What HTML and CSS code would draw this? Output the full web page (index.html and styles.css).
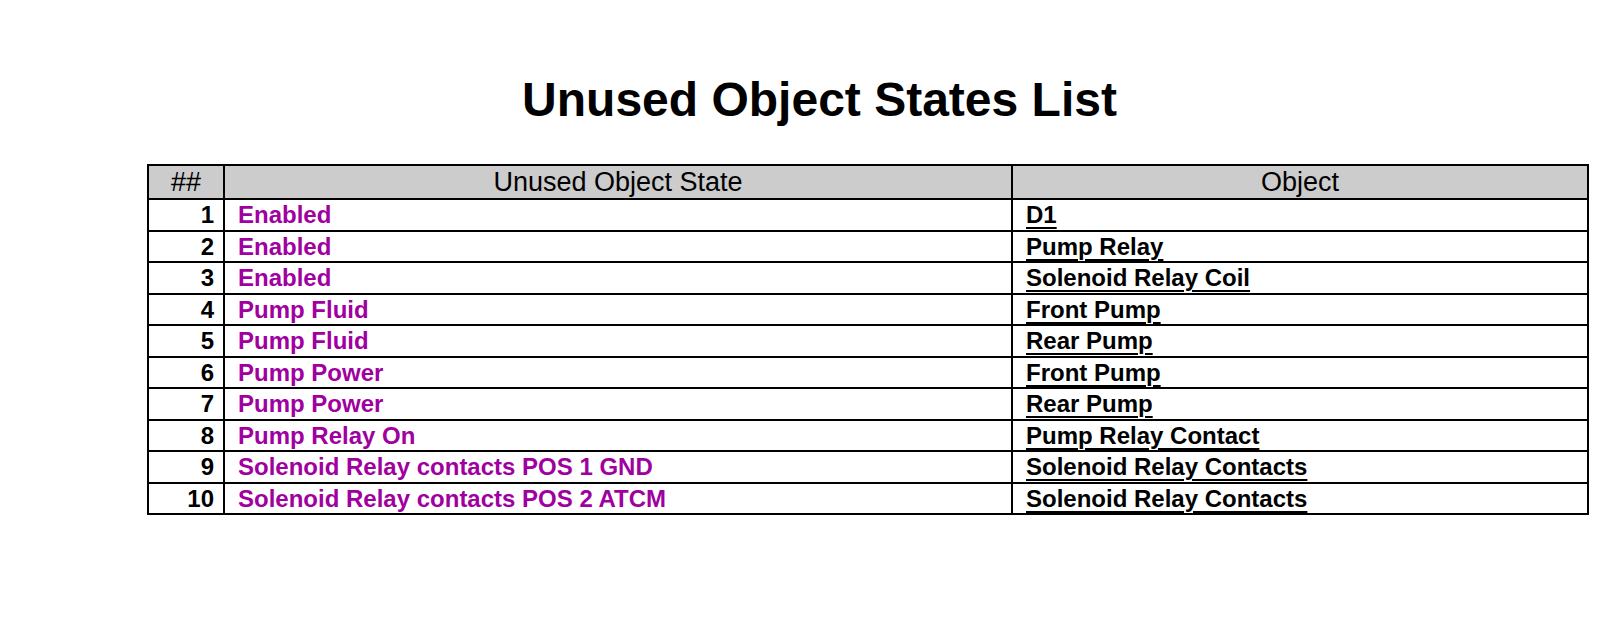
FILE: index.html
```html
<!DOCTYPE html>
<html lang="en">
<head>
<meta charset="utf-8">
<title>Unused Object States List</title>
<link rel="stylesheet" href="styles.css">
</head>
<body>
<div class="page">
  <h1 class="title">Unused Object States List</h1>
  <table class="list">
    <colgroup>
      <col class="c-num">
      <col class="c-state">
      <col class="c-obj">
    </colgroup>
    <thead>
      <tr><th>##</th><th>Unused Object State</th><th>Object</th></tr>
    </thead>
    <tbody>
      <tr><td class="num">1</td><td class="state">Enabled</td><td class="obj"><a>D1</a></td></tr>
      <tr><td class="num">2</td><td class="state">Enabled</td><td class="obj"><a>Pump Relay</a></td></tr>
      <tr><td class="num">3</td><td class="state">Enabled</td><td class="obj"><a>Solenoid Relay Coil</a></td></tr>
      <tr><td class="num">4</td><td class="state">Pump Fluid</td><td class="obj"><a>Front Pump</a></td></tr>
      <tr><td class="num">5</td><td class="state">Pump Fluid</td><td class="obj"><a>Rear Pump</a></td></tr>
      <tr><td class="num">6</td><td class="state">Pump Power</td><td class="obj"><a>Front Pump</a></td></tr>
      <tr><td class="num">7</td><td class="state">Pump Power</td><td class="obj"><a>Rear Pump</a></td></tr>
      <tr><td class="num">8</td><td class="state">Pump Relay On</td><td class="obj"><a>Pump Relay Contact</a></td></tr>
      <tr><td class="num">9</td><td class="state">Solenoid Relay contacts POS 1 GND</td><td class="obj"><a>Solenoid Relay Contacts</a></td></tr>
      <tr><td class="num">10</td><td class="state">Solenoid Relay contacts POS 2 ATCM</td><td class="obj"><a>Solenoid Relay Contacts</a></td></tr>
    </tbody>
  </table>
</div>
</body>
</html>
```

FILE: styles.css
```css
html, body {
  margin: 0;
  padding: 0;
  background: #ffffff;
}

body {
  font-family: "Liberation Sans", Arial, sans-serif;
  color: #000000;
}

.page {
  padding-top: 72px;
}

.title {
  margin: 0;
  padding-left: 34px;
  text-align: center;
  font-size: 48px;
  line-height: 55px;
  font-weight: bold;
}

.list {
  margin: 37px 0 0 147px;
  width: 1440px;
  border-collapse: collapse;
  table-layout: fixed;
  border: 2px solid #000;
}

.c-num { width: 76px; }
.c-state { width: 788px; }
.c-obj { width: 576px; }

.list th,
.list td {
  border: 2px solid #000;
  vertical-align: middle;
  white-space: nowrap;
}

.list th {
  background: #cccccc;
  font-weight: normal;
  font-size: 27px;
  line-height: 30px;
  height: 32px;
  padding: 0;
  text-align: center;
}

.list td {
  height: 31.5px;
  padding: 0 12px 0 13px;
  font-size: 24px;
  line-height: 27px;
  font-weight: bold;
  box-sizing: border-box;
}

.list td.num {
  text-align: right;
  padding-right: 9px;
}

.list td.state {
  color: #a000a0;
}

.list td.obj a {
  color: #000;
  text-decoration: underline;
  text-decoration-thickness: 2px;
  text-underline-offset: 4px;
}
```
